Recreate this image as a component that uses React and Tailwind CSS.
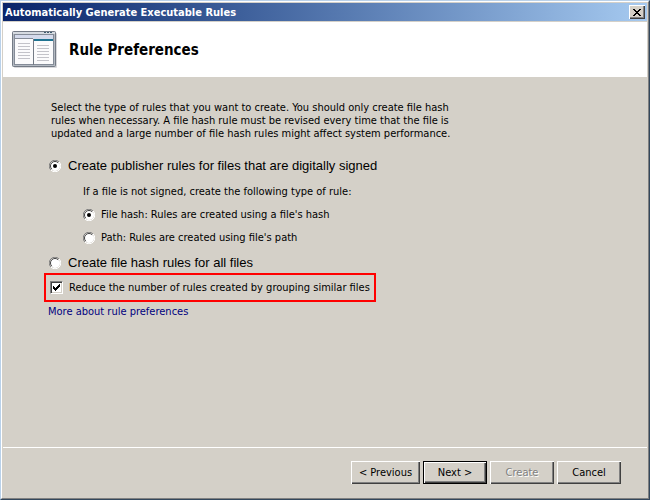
import { useState } from "react";

function DialogIcon() {
  return (
    <svg width="46" height="38" viewBox="0 0 46 38" className="shrink-0" aria-hidden="true">
      <rect x="2" y="2" width="43" height="35" rx="1" fill="#d9d9dc" />
      <rect x="0.5" y="0.5" width="43" height="35" rx="1" fill="#b4bac2" stroke="#747b86" />
      <rect x="1" y="1" width="42" height="2" fill="#d6dbe1" />
      <path d="M32 1h2v1h-2zM35 1h2v1h-2zM38 1h2v1h-2z" fill="#3c5a6e" />
      <rect x="2.5" y="3.5" width="39" height="30" fill="#fbfbfc" stroke="#858c98" />
      <rect x="3" y="4" width="38" height="4" fill="#d5dbec" />
      <rect x="3" y="7" width="18" height="1" fill="#858c98" />
      <rect x="21" y="8" width="1" height="26" fill="#747b86" />
      <rect x="22" y="8" width="19" height="2" fill="#1f7391" />
      <path
        d="M6 12.5h12M6 15.5h12M6 18.5h12M6 21.5h12M6 24.5h12M6 27.5h12M25 14.5h12M25 17.5h12M25 20.5h12M25 23.5h12M25 26.5h12M25 29.5h12"
        stroke="#c3c3c9"
      />
    </svg>
  );
}

function Radio({ id, name, checked, onChange }) {
  return (
    <span className="grid size-3 shrink-0 place-items-center">
      <input
        id={id}
        type="radio"
        name={name}
        checked={checked}
        onChange={onChange}
        className="col-start-1 row-start-1 size-3 appearance-none rounded-full"
      />
      <svg viewBox="0 0 12 12" className="pointer-events-none col-start-1 row-start-1 size-3" aria-hidden="true">
        <circle cx="6" cy="6" r="5" fill="#fff" />
        <path d="M1.9 10.1A5.5 5.5 0 0 1 10.1 1.9" fill="none" stroke="#808080" />
        <path d="M2.8 9.2A4.5 4.5 0 0 1 9.2 2.8" fill="none" stroke="#404040" />
        <path d="M10.1 1.9A5.5 5.5 0 0 1 1.9 10.1" fill="none" stroke="#fff" />
        {checked && <circle cx="6" cy="6" r="2" fill="#000" />}
      </svg>
    </span>
  );
}

function Checkbox({ id, checked, onChange }) {
  return (
    <span className="grid size-[13px] shrink-0 place-items-center">
      <input
        id={id}
        type="checkbox"
        checked={checked}
        onChange={onChange}
        className="col-start-1 row-start-1 size-[13px] appearance-none border border-t-[#808080] border-r-white border-b-white border-l-[#808080] bg-white shadow-[inset_1px_1px_0_#404040,inset_-1px_-1px_0_#d4d0c8]"
      />
      {checked && (
        <svg viewBox="0 0 13 13" className="pointer-events-none col-start-1 row-start-1 size-[13px]" aria-hidden="true">
          <path d="M3 5h1v1h1v1h1v-1h1v-1h1v-1h1v-1h1v3h-1v1h-1v1h-1v1h-1v1h-1v-1h-1v-1h-1z" fill="#000" shapeRendering="crispEdges" />
        </svg>
      )}
    </span>
  );
}

function DialogButton({ children, className = "w-16", isDefault = false, disabled = false }) {
  const edge = isDefault
    ? "border border-black shadow-[inset_1px_1px_0_#fff,inset_-1px_-1px_0_#404040,inset_-2px_-2px_0_#808080]"
    : "shadow-[inset_1px_1px_0_#fff,inset_-1px_-1px_0_#404040,inset_-2px_-2px_0_#808080]";
  const ink = disabled ? "text-[#808080] [text-shadow:1px_1px_0_#fff]" : "text-black";
  return (
    <button type="button" disabled={disabled} className={`flex h-[23px] items-center justify-center ${className} ${edge} ${ink}`}>
      {children}
    </button>
  );
}

export default function App() {
  const [ruleType, setRuleType] = useState("publisher");
  const [fallback, setFallback] = useState("hash");
  const [grouping, setGrouping] = useState(true);

  return (
    <div className="flex min-h-screen flex-col border border-t-[#b9d1ea] border-r-[#33475c] border-b-[#33475c] border-l-[#b9d1ea] bg-[#d4d0c8] font-['DejaVu_Sans_Condensed','DejaVu_Sans',sans-serif] text-[11px] leading-[13px] text-black">
      <div className="flex grow flex-col border border-t-white border-r-[#808080] border-b-[#808080] border-l-white p-px">
        <header className="flex h-[18px] items-center justify-between bg-linear-to-r from-[#0a246a] to-[#a6caf0] px-0.5">
          <h1 className="font-bold text-white">Automatically Generate Executable Rules</h1>
          <button
            type="button"
            aria-label="Close"
            className="flex h-3.5 w-4 items-center justify-center bg-[#d4d0c8] shadow-[inset_1px_1px_0_#fff,inset_-1px_-1px_0_#404040,inset_-2px_-2px_0_#808080]"
          >
            <svg width="8" height="7" viewBox="0 0 8 7" shapeRendering="crispEdges" aria-hidden="true">
              <path d="M0 0h2v1h1v1h2v-1h1v-1h2v1h-1v1h-1v1h-1v1h1v1h1v1h1v1h-2v-1h-1v-1h-2v1h-1v1h-2v-1h1v-1h1v-1h1v-1h-1v-1h-1v-1h-1z" fill="#000" />
            </svg>
          </button>
        </header>

        <div className="mt-px flex h-[55px] items-center gap-[11px] bg-white pt-px pl-[9px]">
          <DialogIcon />
          <h2 className="text-[15px] leading-5 font-bold">Rule Preferences</h2>
        </div>

        <main className="flex grow flex-col items-start pt-6 pr-4 pl-[45px]">
          <p className="pl-[3px]">
            Select the type of rules that you want to create. You should only create file hash
            <br />
            rules when necessary. A file hash rule must be revised every time that the file is
            <br />
            updated and a large number of file hash rules might affect system performance.
          </p>

          <div className="mt-[18px] flex items-center gap-[7px] pl-px">
            <Radio id="publisher" name="rule-type" checked={ruleType === "publisher"} onChange={() => setRuleType("publisher")} />
            <label htmlFor="publisher" className="font-['Liberation_Sans',sans-serif] text-[13px] leading-4">
              Create publisher rules for files that are digitally signed
            </label>
          </div>

          <fieldset className="mt-[11px] pl-[35px]">
            <legend>If a file is not signed, create the following type of rule:</legend>
            <div className="mt-[10px] flex items-center gap-1.5">
              <Radio id="hash" name="fallback" checked={fallback === "hash"} onChange={() => setFallback("hash")} />
              <label htmlFor="hash">File hash: Rules are created using a file's hash</label>
            </div>
            <div className="mt-[10px] flex items-center gap-1.5">
              <Radio id="path" name="fallback" checked={fallback === "path"} onChange={() => setFallback("path")} />
              <label htmlFor="path">Path: Rules are created using file's path</label>
            </div>
          </fieldset>

          <div className="mt-[11px] flex items-center gap-[7px] pl-px">
            <Radio id="all-files" name="rule-type" checked={ruleType === "all"} onChange={() => setRuleType("all")} />
            <label htmlFor="all-files" className="font-['Liberation_Sans',sans-serif] text-[13px] leading-4">
              Create file hash rules for all files
            </label>
          </div>

          <div className="mt-0.5 -ml-1 flex h-[29px] items-center gap-1.5 border-2 border-[#ff0000] pr-1 pl-1">
            <Checkbox id="grouping" checked={grouping} onChange={() => setGrouping(!grouping)} />
            <label htmlFor="grouping">Reduce the number of rules created by grouping similar files</label>
          </div>

          <a href="#preferences" className="mt-[3px] text-[#00007f]">
            More about rule preferences
          </a>
        </main>

        <footer className="flex h-[50px] justify-end border-t border-white pt-[13px] pr-[26px]">
          <DialogButton className="mr-[3px] w-[69px]">&lt; Previous</DialogButton>
          <DialogButton className="mr-[3px] w-16" isDefault>
            Next &gt;
          </DialogButton>
          <DialogButton className="mr-[3px] w-16" disabled>
            Create
          </DialogButton>
          <DialogButton>Cancel</DialogButton>
        </footer>
      </div>
    </div>
  );
}
